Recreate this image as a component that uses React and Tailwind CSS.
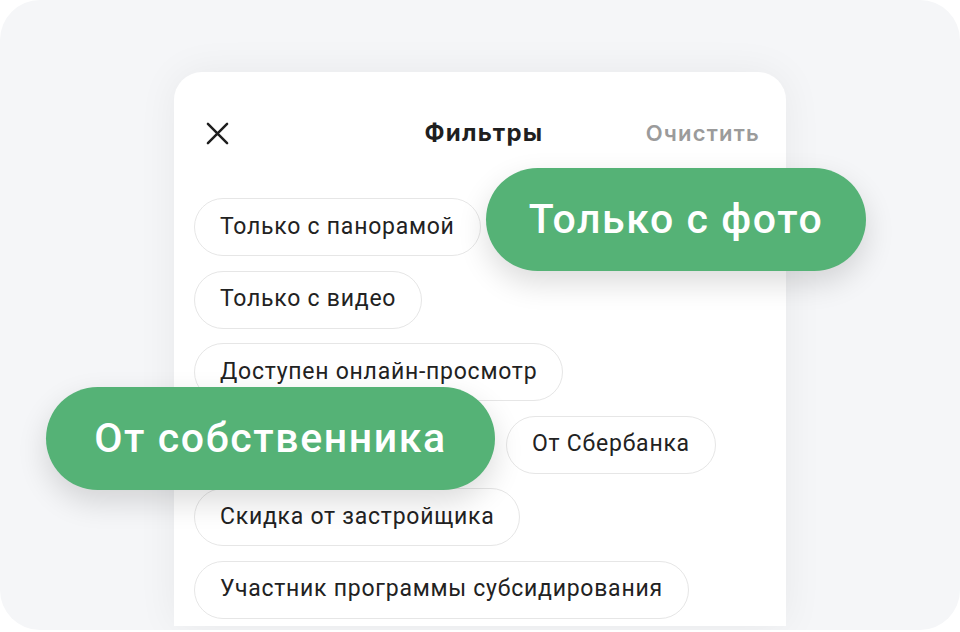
import React from "react";

const chipCls =
  "h-[58px] flex items-center rounded-full border-[1.5px] border-[#e6e6e6] bg-white px-[25px] text-[23px] tracking-[0.75px] text-[#222222] whitespace-nowrap";

function Chip({ children, className = "" }) {
  return <div className={chipCls + " " + className}>{children}</div>;
}

const inter = { fontFamily: "Inter, 'Noto Sans', sans-serif" };

export default function App() {
  return (
    <div className="w-[960px] h-[632px] bg-white" style={{ fontFamily: "Roboto, 'Noto Sans', sans-serif" }}>
      <div className="relative w-[960px] h-[630px] rounded-[40px] bg-[#f5f6f8] overflow-hidden">
        <div className="pt-[72px] pl-[174px]">
          <div className="w-[612px] h-[554px] rounded-t-[28px] bg-white shadow-[0_0_40px_rgba(0,0,0,0.06)] overflow-hidden">
            <div className="h-[126px] pt-[46px] pl-[32px] pr-[26px] flex items-start" style={inter}>
              <div className="w-[130px] h-[30px] flex items-center">
                <svg width="23" height="23" viewBox="0 0 24 24" fill="none">
                  <path d="M2 2L22 22M22 2L2 22" stroke="#1f1f1f" strokeWidth="2.6" strokeLinecap="round" />
                </svg>
              </div>
              <div className="flex-1 h-[30px] flex items-center justify-center text-[24px] font-bold text-[#1f1f1f] tracking-[1.3px] pl-[2px]">
                Фильтры
              </div>
              <div className="w-[130px] h-[30px] flex items-center justify-end text-[22px] font-semibold text-[#9b9b9b] tracking-[1.2px]">
                Очистить
              </div>
            </div>
            <div className="pl-[20px] flex flex-col items-start gap-[14.5px]">
              <Chip>Только с панорамой</Chip>
              <Chip>Только с видео</Chip>
              <Chip>Доступен онлайн-просмотр</Chip>
              <div className="flex gap-[12px]">
                <div className="w-[300px] h-[58px] rounded-full border-[1.5px] border-[#e6e6e6] bg-white" />
                <Chip>От Сбербанка</Chip>
              </div>
              <Chip>Скидка от застройщика</Chip>
              <Chip>Участник программы субсидирования</Chip>
            </div>
          </div>
        </div>

        <div className="absolute left-[486px] top-[168px] h-[103px] w-[380px] rounded-full bg-[#55b276] shadow-[0_12px_30px_rgba(0,0,0,0.14)] flex items-center justify-center text-white text-[41px] font-medium tracking-[1.6px] whitespace-nowrap">
          Только с фото
        </div>
        <div className="absolute left-[46px] top-[387px] h-[103px] w-[449px] rounded-full bg-[#55b276] shadow-[0_12px_30px_rgba(0,0,0,0.14)] flex items-center justify-center text-white text-[41px] font-medium tracking-[1.6px] whitespace-nowrap">
          От собственника
        </div>
      </div>
    </div>
  );
}
